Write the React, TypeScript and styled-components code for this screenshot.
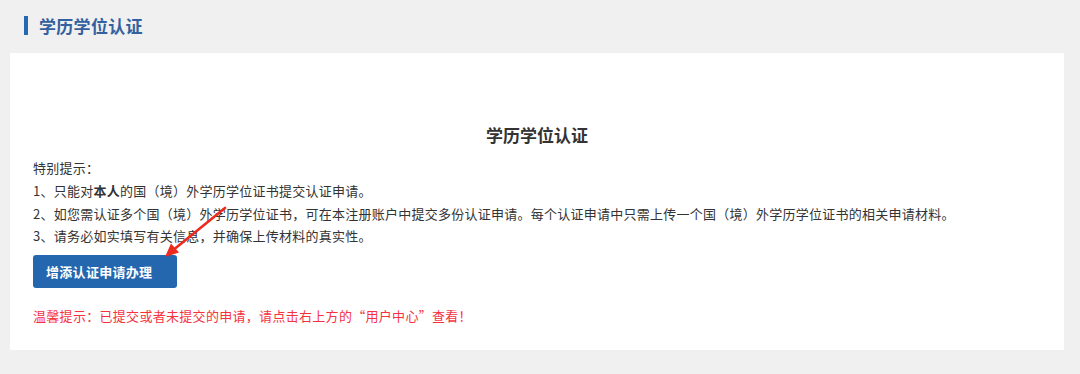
import React from 'react';
import styled, { createGlobalStyle } from 'styled-components';

const GlobalStyle = createGlobalStyle`
  html, body {
    margin: 0;
    padding: 0;
    background: #f0f0f0;
    font-family: "Noto Sans CJK SC", "Noto Sans", sans-serif;
    color: #333;
  }
`;

const Page = styled.div`
  width: 1080px;
  height: 374px;
  background: #f0f0f0;
  padding: 0 16px 24px 10px;
  box-sizing: border-box;
`;

const Header = styled.div`
  display: flex;
  align-items: center;
  gap: 11px;
  height: 53px;
  padding: 0 0 2px 14px;
  box-sizing: border-box;
`;

const HeaderBar = styled.span`
  display: block;
  width: 4px;
  height: 19px;
  background: #2468b0;
`;

const HeaderTitle = styled.h2`
  margin: 0;
  font-size: 17px;
  font-weight: bold;
  color: #33609f;
  letter-spacing: 0.3px;
`;

const Panel = styled.div`
  position: relative;
  background: #fff;
  height: 297px;
  padding: 70px 23px 0;
  box-sizing: border-box;
`;

const PanelTitle = styled.h3`
  margin: 0;
  font-size: 17px;
  line-height: 24px;
  font-weight: bold;
  text-align: center;
  color: #333;
`;

const Tips = styled.div`
  margin-top: 10px;
  font-size: 13px;
  line-height: 22.8px;
  letter-spacing: 0.25px;
  color: #333;
`;

const TipLine = styled.p`
  margin: 0;
`;

const Strong = styled.b`
  font-weight: bold;
`;

const Button = styled.button`
  display: block;
  margin-top: 7px;
  width: 144px;
  height: 33px;
  padding: 0 0 0 13px;
  text-align: left;
  border: none;
  border-radius: 3px;
  background: #2467ae;
  color: #fff;
  font-family: inherit;
  font-size: 13px;
  font-weight: bold;
  letter-spacing: 0.3px;
  cursor: pointer;
`;

const Warm = styled.p`
  margin: 18px 0 0;
  font-size: 13px;
  line-height: 20px;
  letter-spacing: 0.3px;
  color: #f5333f;
`;

const Arrow = styled.svg`
  position: absolute;
  left: 145px;
  top: 150px;
  width: 80px;
  height: 60px;
  overflow: visible;
`;

export default function App() {
  return (
    <>
      <GlobalStyle />
      <Page>
        <Header>
          <HeaderBar />
          <HeaderTitle>学历学位认证</HeaderTitle>
        </Header>
        <Panel>
          <PanelTitle>学历学位认证</PanelTitle>
          <Tips>
            <TipLine>特别提示：</TipLine>
            <TipLine>
              1、只能对<Strong>本人</Strong>的国（境）外学历学位证书提交认证申请。
            </TipLine>
            <TipLine>
              2、如您需认证多个国（境）外学历学位证书，可在本注册账户中提交多份认证申请。每个认证申请中只需上传一个国（境）外学历学位证书的相关申请材料。
            </TipLine>
            <TipLine>3、请务必如实填写有关信息，并确保上传材料的真实性。</TipLine>
          </Tips>
          <Button>增添认证申请办理</Button>
          <Warm>温馨提示：已提交或者未提交的申请，请点击右上方的“用户中心”查看！</Warm>
          <Arrow viewBox="0 0 80 60">
            <line x1="70" y1="5" x2="17" y2="48" stroke="#ee2a1e" strokeWidth="2.6" strokeLinecap="round" />
            <polygon points="10,54 24,49.5 16,40.5" fill="#ee2a1e" />
          </Arrow>
        </Panel>
      </Page>
    </>
  );
}
